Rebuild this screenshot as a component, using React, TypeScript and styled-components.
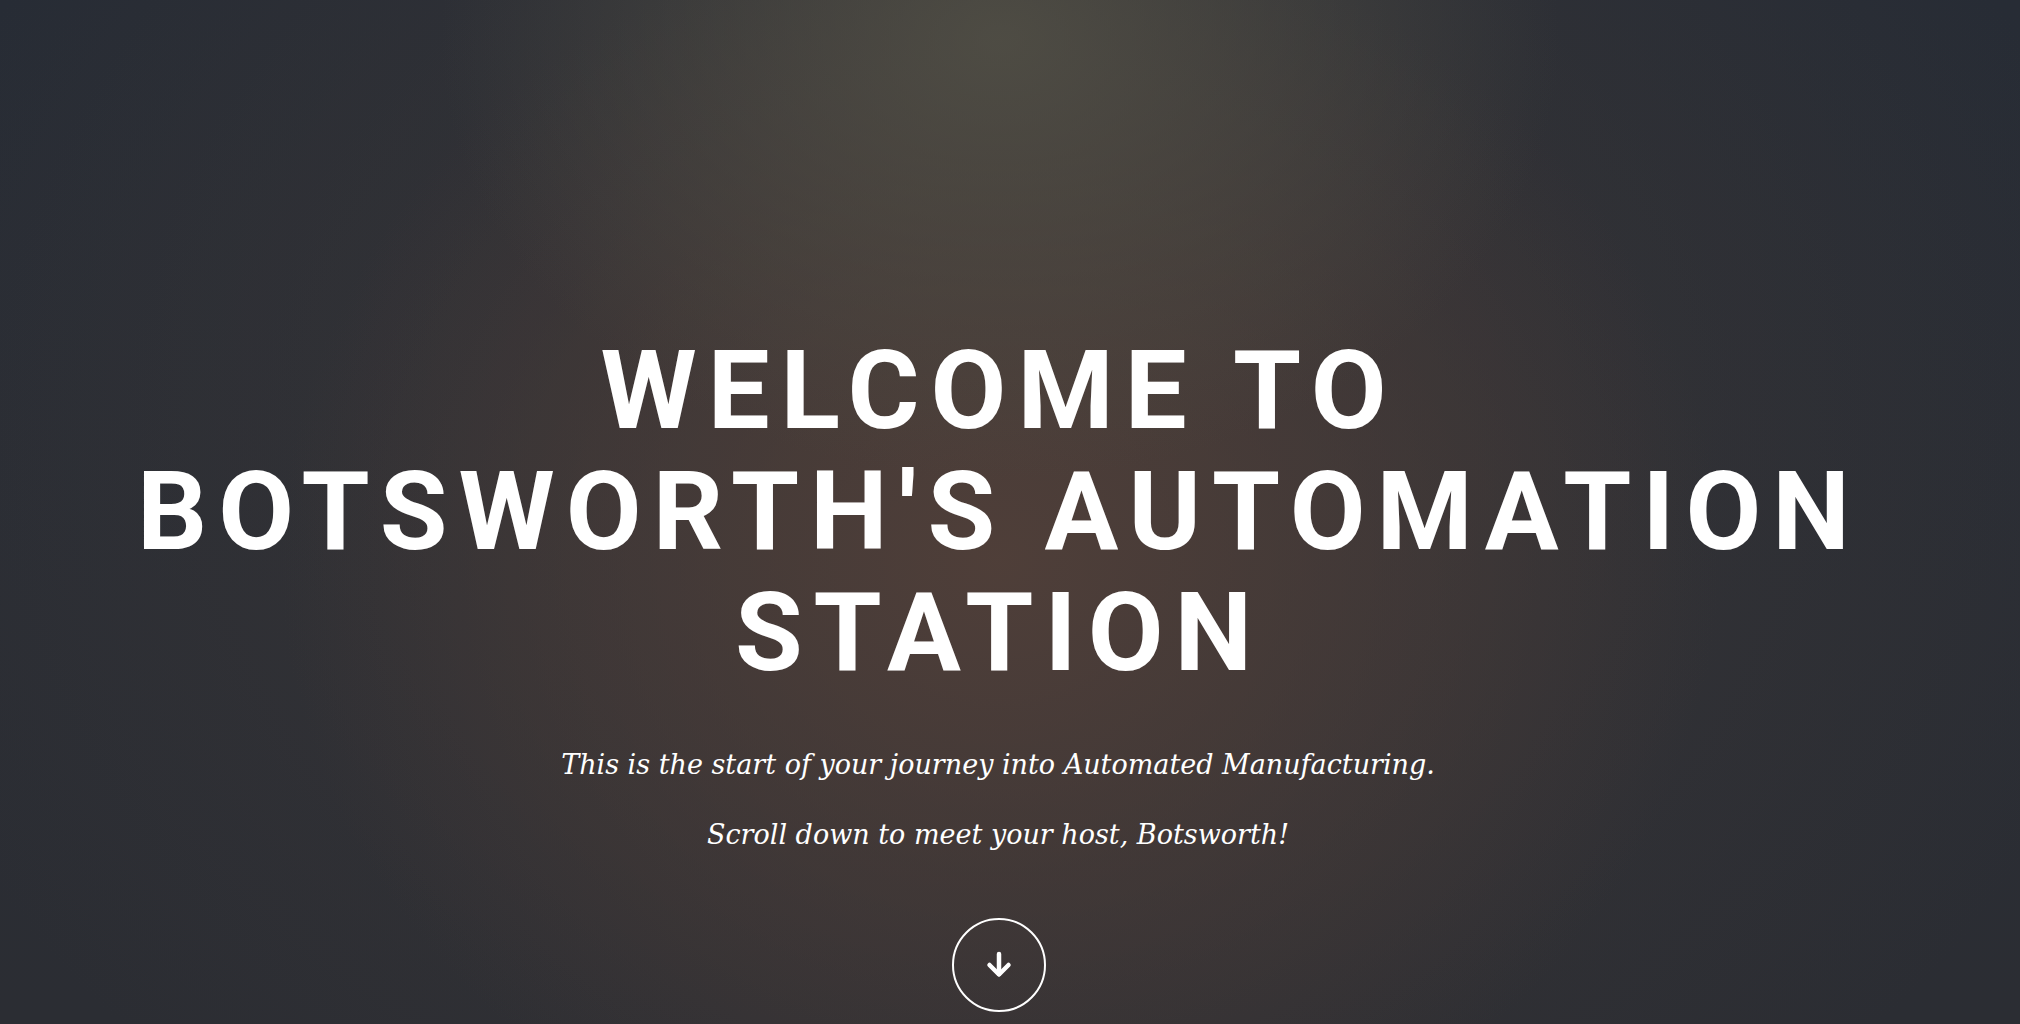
import React from "react";
import styled, { createGlobalStyle } from "styled-components";

const Global = createGlobalStyle`
  html, body { margin: 0; padding: 0; background: #262a33; }
  body { overflow: hidden; }
`;

const Banner = styled.section`
  width: 2020px;
  height: 1024px;
  box-sizing: border-box;
  display: flex;
  flex-direction: column;
  align-items: center;
  padding-top: 330px;
  overflow: hidden;
  background:
    radial-gradient(ellipse 560px 440px at 1000px 40px, rgba(82, 80, 70, 0.85), rgba(82, 80, 70, 0) 100%),
    radial-gradient(ellipse 720px 640px at 1000px 560px, rgba(80, 63, 57, 0.95), rgba(80, 63, 57, 0) 100%),
    radial-gradient(ellipse 1150px 900px at 1000px 450px, rgba(58, 54, 54, 1), rgba(58, 54, 54, 0) 100%),
    linear-gradient(180deg, #272c35 0%, #2a2d34 60%, #2b2d33 100%);
`;

const Title = styled.h2`
  margin: 0;
  padding-right: 22px;
  color: #ffffff;
  font-family: Roboto, "Open Sans", "Liberation Sans", sans-serif;
  font-weight: 700;
  font-size: 110px;
  line-height: 121px;
  letter-spacing: 11px;
  text-transform: uppercase;
  text-align: center;
  white-space: nowrap;
`;

const Sub = styled.div`
  display: flex;
  flex-direction: column;
  align-items: center;
  margin-top: 37px;
  padding-right: 24px;
`;

const Line = styled.p`
  margin: 0;
  color: #ffffff;
  font-family: "DejaVu Serif", "Liberation Serif", serif;
  font-style: italic;
  font-size: 27px;
  line-height: 70px;
  text-align: center;
`;

const ScrollButton = styled.a`
  margin-top: 48px;
  margin-right: 22px;
  width: 94px;
  height: 94px;
  box-sizing: border-box;
  border: 2.5px solid #ffffff;
  border-radius: 50%;
  display: flex;
  align-items: center;
  justify-content: center;
  color: #ffffff;
`;

export default function App() {
  return (
    <>
      <Global />
      <Banner>
        <Title>
          Welcome to
          <br />
          Botsworth's Automation
          <br />
          Station
        </Title>
        <Sub>
          <Line>This is the start of your journey into Automated Manufacturing.</Line>
          <Line>Scroll down to meet your host, Botsworth!</Line>
        </Sub>
        <ScrollButton href="#one" aria-label="Scroll down">
          <svg width="28" height="28" viewBox="0 0 28 28" fill="none">
            <path d="M14 3 V23" stroke="#fff" strokeWidth="4.5" strokeLinecap="round" />
            <path d="M4.5 14 L14 23.5 L23.5 14" stroke="#fff" strokeWidth="4.5" strokeLinecap="round" strokeLinejoin="round" />
          </svg>
        </ScrollButton>
      </Banner>
    </>
  );
}
